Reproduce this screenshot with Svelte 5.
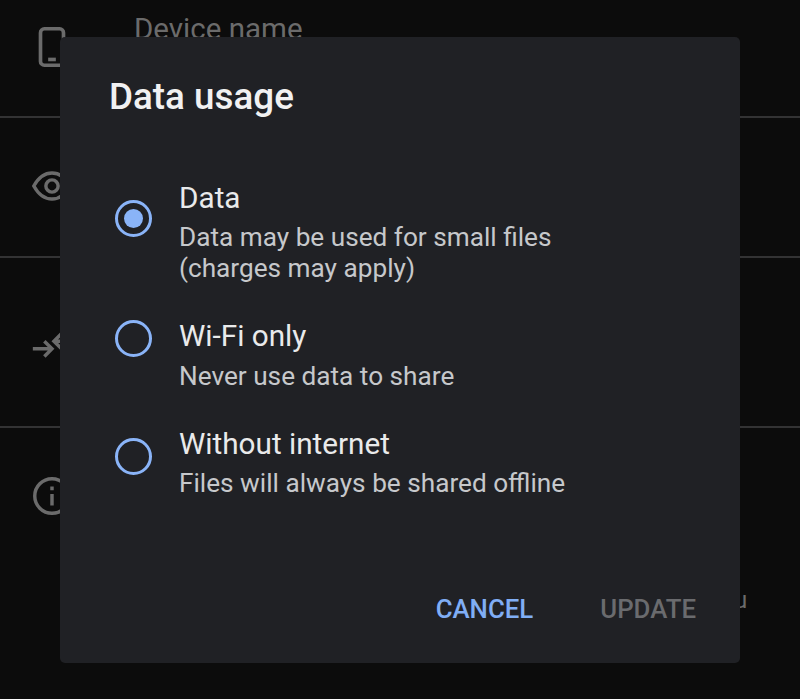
<script lang="ts">
	let selected = $state('data');

	const options = [
		{ id: 'data', title: 'Data', lines: ['Data may be used for small files', '(charges may apply)'] },
		{ id: 'wifi', title: 'Wi-Fi only', lines: ['Never use data to share'] },
		{ id: 'offline', title: 'Without internet', lines: ['Files will always be shared offline'] }
	];
</script>

<div class="settings">
	<div class="row row--device">
		<svg class="icon" viewBox="0 0 24 24" fill="none" stroke="currentColor" stroke-width="1.900">
			<rect x="6" y="2.500" width="12" height="19" rx="2"/>
			<path d="M10 18.500h4"/>
		</svg>
		<span class="label">Device name</span>
	</div>
	<div class="row row--visibility">
		<svg class="icon" viewBox="0 0 24 24" fill="none" stroke="currentColor" stroke-width="1.800">
			<path d="M2.500 12C5 7.500 8.300 5.200 12 5.200s7 2.300 9.500 6.800C19 16.500 15.700 18.800 12 18.800S5 16.500 2.500 12z"/>
			<circle cx="12" cy="12" r="3.200"/>
		</svg>
	</div>
	<div class="row row--data">
		<svg class="icon" viewBox="0 0 24 24" fill="none" stroke="currentColor" stroke-width="1.800">
			<path d="M2 14h10M8 10l4 4-4 4"/>
			<path d="M23 10H13M17 6l-4 4 4 4"/>
		</svg>
	</div>
	<div class="row row--info">
		<svg class="icon" viewBox="0 0 24 24" fill="none" stroke="currentColor" stroke-width="1.800">
			<circle cx="12" cy="12" r="9"/>
			<path d="M12 11v6M12 7v2"/>
		</svg>
		<span class="peek">u</span>
	</div>
</div>

<div class="overlay">
	<div class="dialog">
		<h2 class="title">Data usage</h2>
		<div class="options">
			{#each options as opt}
				<button class="option option--{opt.id}" onclick={() => (selected = opt.id)}>
					<span class="radio" class:radio--on={selected === opt.id}></span>
					<span class="text">
						<span class="name">{opt.title}</span>
						{#each opt.lines as line}
							<span class="desc">{line}</span>
						{/each}
					</span>
				</button>
			{/each}
		</div>
		<div class="actions">
			<button class="action action--cancel">CANCEL</button>
			<button class="action action--update">UPDATE</button>
		</div>
	</div>
</div>

<style>
	:global(body) {
		margin: 0;
		background: #0c0c0c;
		font-family: Roboto, sans-serif;
		overflow: hidden;
	}

	.settings {
		height: 699px;
		overflow: hidden;
		color: #6b6b6b;
	}

	.row {
		display: flex;
		box-sizing: border-box;
		border-bottom: 2px solid #333334;
		padding-left: 29px;
		position: relative;
	}

	.row--device { height: 118px; padding-top: 24px; }
	.row--visibility { height: 140px; padding-top: 45px; }
	.row--data { height: 170px; padding-top: 64px; }
	.row--info { height: 271px; padding-top: 45px; border-bottom: 0; }

	.icon {
		width: 46px;
		height: 46px;
		flex-shrink: 0;
	}

	.label {
		margin-left: 59px;
		margin-top: -2px;
		font-size: 29.500px;
		line-height: 14px;
	}

	.peek {
		position: absolute;
		left: 734px;
		top: 158px;
		font-size: 24px;
		line-height: 28px;
	}

	.overlay {
		position: fixed;
		inset: 0;
		display: flex;
		align-items: center;
		justify-content: center;
	}

	.dialog {
		width: 680px;
		height: 626px;
		box-sizing: border-box;
		background: #202125;
		border-radius: 5px;
		padding: 40px 44px 0 49px;
		display: flex;
		flex-direction: column;
	}

	.title {
		margin: 0;
		font-size: 36.800px;
		line-height: 40px;
		font-weight: 500;
		color: #f1f1f2;
	}

	.options {
		display: flex;
		flex-direction: column;
		margin-top: 63px;
		flex: 1;
	}

	.option {
		display: flex;
		align-items: flex-start;
		gap: 27px;
		padding: 0 0 0 6px;
		border: 0;
		background: none;
		text-align: left;
		font: inherit;
		color: inherit;
	}

	.option--data { height: 138px; }
	.option--wifi { height: 108px; }

	.radio {
		width: 37px;
		height: 37px;
		box-sizing: border-box;
		border: 3.500px solid #8ab4f8;
		border-radius: 50%;
		flex-shrink: 0;
		display: flex;
		align-items: center;
		justify-content: center;
	}

	.option--data .radio { margin-top: 20px; }
	.option--wifi .radio { margin-top: 2px; }
	.option--offline .radio { margin-top: 12px; }

	.radio--on::after {
		content: '';
		width: 19px;
		height: 19px;
		border-radius: 50%;
		background: #8ab4f8;
	}

	.text {
		display: flex;
		flex-direction: column;
	}

	.name {
		font-size: 29.700px;
		line-height: 36px;
		color: #e9eaeb;
		margin-bottom: 6px;
	}

	.option--wifi .name { margin-bottom: 7px; }

	.desc {
		font-size: 26.200px;
		line-height: 31px;
		color: #c6c8cb;
	}

	.actions {
		display: flex;
		justify-content: flex-end;
		gap: 67px;
		padding-bottom: 38px;
	}

	.action {
		border: 0;
		background: none;
		padding: 0;
		font: inherit;
		font-size: 25.800px;
		line-height: 32px;
		font-weight: 500;
	}

	.action--cancel { color: #80aef5; }
	.action--update { color: #6a6b6e; }
</style>
